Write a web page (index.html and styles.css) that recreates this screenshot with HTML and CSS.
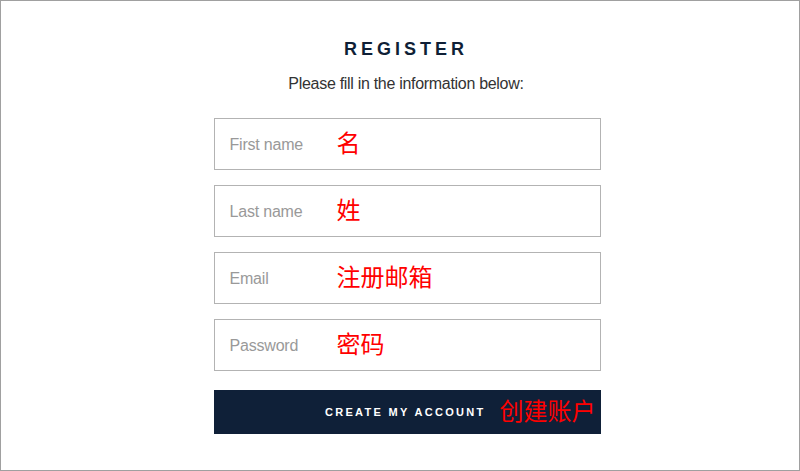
FILE: index.html
```html
<!DOCTYPE html>
<html lang="en">
<head>
    <meta charset="UTF-8">
    <meta name="viewport" content="width=device-width, initial-scale=1.0">
    <title>Register</title>
    <link rel="stylesheet" href="styles.css">
</head>
<body>
    <div class="page">
        <h1 class="title">REGISTER</h1>
        <p class="subtitle">Please fill in the information below:</p>

        <form class="register-form">
            <div class="field">
                <span class="placeholder">First name</span>
                <span class="note">名</span>
            </div>
            <div class="field">
                <span class="placeholder">Last name</span>
                <span class="note">姓</span>
            </div>
            <div class="field">
                <span class="placeholder">Email</span>
                <span class="note">注册邮箱</span>
            </div>
            <div class="field">
                <span class="placeholder">Password</span>
                <span class="note">密码</span>
            </div>
            <button type="button" class="submit">
                <span class="submit-label">CREATE MY ACCOUNT</span>
                <span class="note">创建账户</span>
            </button>
        </form>
    </div>
</body>
</html>
```

FILE: styles.css
```css
* {
    box-sizing: border-box;
}
html, body {
    margin: 0;
    padding: 0;
    background: #fff;
}
body {
    font-family: "Liberation Sans", Arial, "Noto Sans CJK SC", sans-serif;
}
.page {
    width: 800px;
    height: 471px;
    border: 1px solid #a0a0a0;
    padding-top: 36px;
    display: flex;
    flex-direction: column;
    align-items: center;
}
.title {
    margin: 0 0 0 12px;
    font-size: 18px;
    line-height: 24px;
    font-weight: bold;
    letter-spacing: 4px;
    color: #0f1f36;
}
.subtitle {
    margin: 13px 0 0 12px;
    font-size: 16px;
    line-height: 20px;
    color: #333;
    letter-spacing: -0.3px;
}
.register-form {
    margin: 24px 0 0 14px;
    width: 387px;
    display: flex;
    flex-direction: column;
}
.field {
    height: 52px;
    border: 1px solid #b3b3b3;
    margin-bottom: 15px;
    padding-left: 15px;
    display: flex;
    align-items: center;
}
.field:nth-child(4) {
    margin-bottom: 19px;
}
.placeholder {
    width: 107px;
    margin-top: 2px;
    font-size: 16px;
    color: #999;
    letter-spacing: -0.2px;
}
.note {
    font-family: "Noto Sans CJK SC", sans-serif;
    font-size: 24px;
    line-height: 28px;
    color: #f00;
    margin-top: -5px;
}
.submit {
    height: 44px;
    border: none;
    background: #0f2038;
    padding: 0 5px 0 0;
    display: flex;
    align-items: center;
    justify-content: flex-end;
    cursor: pointer;
}
.submit-label {
    font-family: "Liberation Sans", Arial, sans-serif;
    font-size: 11px;
    font-weight: bold;
    letter-spacing: 2.3px;
    color: #fff;
    margin-right: 14px;
}
.submit .note {
    margin-top: -4px;
}
```
